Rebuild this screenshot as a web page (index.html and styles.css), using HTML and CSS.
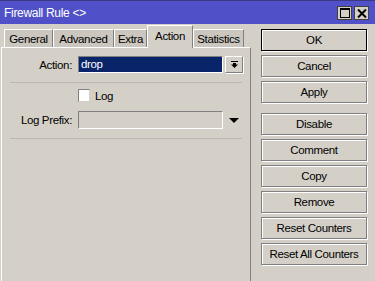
FILE: index.html
```html
<!DOCTYPE html>
<html>
<head>
<meta charset="utf-8">
<link rel="stylesheet" href="styles.css">
</head>
<body>
<div class="window">
  <div class="titlebar">
    <span class="title">Firewall Rule &lt;&gt;</span>
    <div class="tbtns">
      <span class="tbtn"><svg width="10" height="10" viewBox="0 0 10 10"><rect x="0.5" y="0.5" width="9" height="9" fill="none" stroke="#000" stroke-width="1"/><rect x="0" y="0" width="10" height="2" fill="#000"/></svg></span>
      <span class="tbtn"><svg width="10" height="9" viewBox="0 0 10 9"><path d="M1 0.5 L9 8.5 M9 0.5 L1 8.5" stroke="#000" stroke-width="2" fill="none"/></svg></span>
    </div>
  </div>
  <div class="main">
    <div class="left">
      <div class="tabs">
        <div class="tab t-general">General</div>
        <div class="tab t-advanced">Advanced</div>
        <div class="tab t-extra">Extra</div>
        <div class="tab t-action active">Action</div>
        <div class="tab t-stats">Statistics</div>
      </div>
      <div class="panel">
        <div class="row row-action">
          <span class="label">Action:</span>
          <div class="select">drop</div>
          <div class="dropbtn"><svg width="7" height="7" viewBox="0 0 7 7"><rect x="0" y="0" width="7" height="1" fill="#000"/><rect x="2" y="2" width="3" height="2" fill="#000"/><path d="M0 3.5 H7 L3.5 7 Z" fill="#000"/></svg></div>
        </div>
        <div class="sep"></div>
        <div class="row row-check">
          <span class="label"></span>
          <span class="checkbox"></span>
          <span class="checklabel">Log</span>
        </div>
        <div class="row row-prefix">
          <span class="label">Log Prefix:</span>
          <div class="input"></div>
          <svg class="tri" width="10" height="5" viewBox="0 0 10 5"><path d="M0 0 H10 L5 5 Z" fill="#000"/></svg>
        </div>
        <div class="sep sep2"></div>
      </div>
    </div>
    <div class="buttons">
      <div class="btn default">OK</div>
      <div class="btn">Cancel</div>
      <div class="btn">Apply</div>
      <div class="btn group">Disable</div>
      <div class="btn">Comment</div>
      <div class="btn">Copy</div>
      <div class="btn">Remove</div>
      <div class="btn">Reset Counters</div>
      <div class="btn">Reset All Counters</div>
    </div>
  </div>
</div>
</body>
</html>
```

FILE: styles.css
```css
* { box-sizing: border-box; }
html, body { margin: 0; padding: 0; }
body {
  font-family: "Liberation Sans", Arial, sans-serif;
  font-size: 11.5px;
  letter-spacing: -0.35px;
  color: #000;
  background: #d4d0c8;
}
.window {
  width: 375px;
  height: 281px;
  background: #d4d0c8;
  display: flex;
  flex-direction: column;
  overflow: hidden;
}
.titlebar {
  height: 24px;
  background: #5050c8;
  border-top: 1px solid #3a3a80;
  display: flex;
  align-items: center;
  justify-content: space-between;
  padding: 0 6px 0 4px;
  flex: none;
}
.title {
  color: #fff;
  font-size: 12px;
  letter-spacing: -0.3px;
  line-height: 1;
}
.tbtns { display: flex; gap: 2px; margin-top: 1px; }
.tbtn {
  width: 15px;
  height: 14px;
  background: #d4d0c8;
  border: 1px solid #404040;
  display: flex;
  align-items: center;
  justify-content: center;
}
.main {
  flex: 1;
  display: flex;
}
.left {
  width: 251px;
  display: flex;
  flex-direction: column;
}
.tabs {
  height: 23px;
  display: flex;
  align-items: flex-end;
  padding-left: 4px;
  flex: none;
}
.tab {
  height: 18px;
  background: #cbc7bf;
  border-top: 1px solid #fff;
  border-left: 1px solid #fff;
  border-right: 1px solid #808080;
  display: flex;
  align-items: center;
  justify-content: center;
  padding-top: 1px;
}
.tab.active {
  height: 23px;
  background: #d4d0c8;
  padding-bottom: 3px;
  margin-bottom: -1px;
  position: relative;
  z-index: 1;
}
.t-general { width: 49px; }
.t-advanced { width: 61px; }
.t-extra { width: 33px; }
.t-action { width: 46px; }
.t-stats { width: 51px; }
.panel {
  flex: 1;
  margin-left: 1px;
  border-top: 1px solid #fff;
  border-left: 1px solid #fff;
  border-right: 1px solid #808080;
  padding-top: 8px;
}
.row {
  display: flex;
  align-items: center;
}
.label {
  width: 70px;
  text-align: right;
  margin-right: 6px;
  flex: none;
}
.select {
  width: 145px;
  height: 17px;
  background: #0a246a;
  color: #fff;
  border: 1px solid;
  border-color: #808080 #fff #fff #808080;
  padding-left: 2px;
  line-height: 14px;
}
.dropbtn {
  width: 18px;
  height: 17px;
  margin-left: 2px;
  border: 1px solid;
  border-color: #fff #808080 #808080 #fff;
  box-shadow: 1px 1px 0 #fff;
  display: flex;
  align-items: center;
  justify-content: center;
}
.sep {
  height: 1px;
  background: #bcb8b0;
  margin: 9px 8px 0 8px;
}
.row-check { margin-top: 6px; }
.checkbox {
  width: 12px;
  height: 13px;
  background: #fff;
  border: 1px solid;
  border-color: #808080 #d4d0c8 #d4d0c8 #808080;
}
.checklabel { margin-left: 5px; }
.row-prefix { margin-top: 9px; }
.input {
  width: 145px;
  height: 18px;
  border: 1px solid;
  border-color: #808080 #fff #fff #808080;
}
.tri { margin-left: 6px; }
.buttons {
  margin-left: 10px;
  padding-top: 5px;
  display: flex;
  flex-direction: column;
}
.btn {
  width: 106px;
  height: 22px;
  margin-bottom: 4px;
  border: 1px solid #808080;
  box-shadow: inset 1px 1px 0 #fff, 1px 1px 0 #fff;
  display: flex;
  align-items: center;
  justify-content: center;
  padding-bottom: 1px;
}
.btn.default {
  border-color: #000;
}
.btn.group { margin-top: 6px; }
```
